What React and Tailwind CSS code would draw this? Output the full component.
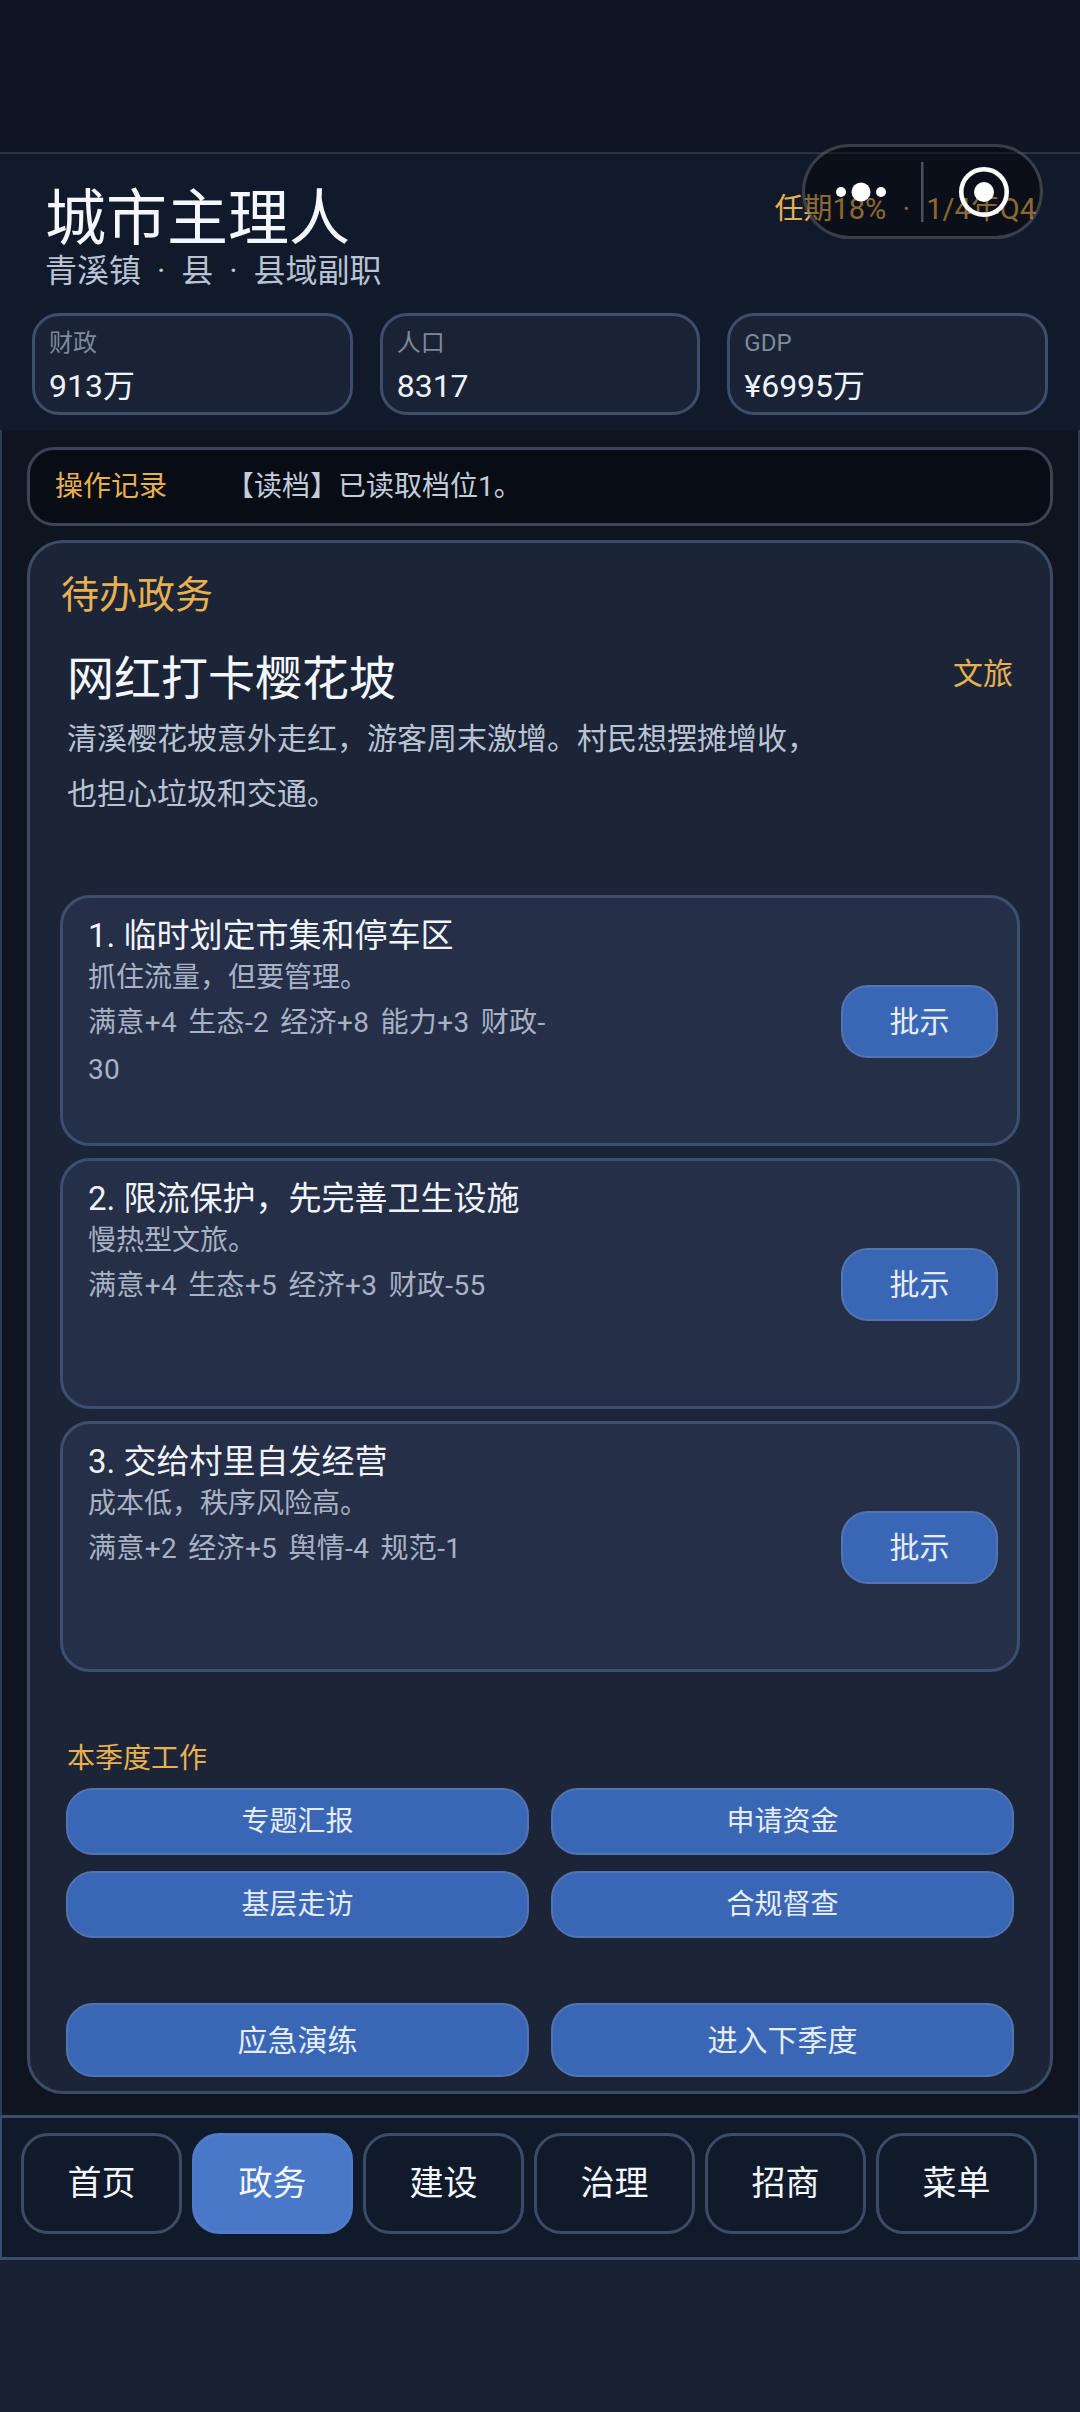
const FONT = "font-['Roboto','Noto_Sans_CJK_SC',sans-serif]";

const stats = [
  { label: "财政", value: "913万" },
  { label: "人口", value: "8317" },
  { label: "GDP", value: "¥6995万" },
];

const options = [
  { title: "1. 临时划定市集和停车区", desc: "抓住流量，但要管理。", effect: "满意+4 生态-2 经济+8 能力+3 财政-\n30" },
  { title: "2. 限流保护，先完善卫生设施", desc: "慢热型文旅。", effect: "满意+4 生态+5 经济+3 财政-55" },
  { title: "3. 交给村里自发经营", desc: "成本低，秩序风险高。", effect: "满意+2 经济+5 舆情-4 规范-1" },
];

const tabs = ["首页", "政务", "建设", "治理", "招商", "菜单"];

const Capsule = () => (
  <div className="absolute left-[802px] top-[144px] h-[95px] w-[241px] rounded-full border-[3px] border-white/20 bg-black/40">
    <svg width="241" height="95" viewBox="0 0 241 95" className="absolute -left-[3px] -top-[3px]">
      <circle cx="39" cy="48" r="5" fill="#fff" />
      <circle cx="59" cy="48" r="9.5" fill="#fff" />
      <circle cx="79" cy="48" r="5" fill="#fff" />
      <rect x="119" y="18" width="2.5" height="60" fill="#4a505c" />
      <circle cx="182" cy="48" r="22.75" fill="none" stroke="#fff" strokeWidth="4.5" />
      <circle cx="182" cy="48" r="10" fill="#fff" />
    </svg>
  </div>
);

const ActionButton = ({ children, className }) => (
  <button className={`flex items-center justify-center rounded-[27px] border-2 border-[#5274b0] bg-[#3a67b5] text-[#e6ecf7] ${className}`}>
    {children}
  </button>
);

export default function App() {
  return (
    <div className={`relative flex h-[2412px] w-[1080px] flex-col overflow-hidden bg-[#182131] ${FONT}`}>
      <div className="h-[152px] bg-[#0f1623]" />

      <header className="h-[278px] border-t-2 border-[#2a3446] bg-[#111a2b] pt-[25px]">
        <div className="flex items-start justify-between pl-[45px] pr-[44px]">
          <div>
            <h1 className="mt-[8px] text-[61px] leading-[64px] text-[#f4f7fd]">城市主理人</h1>
            <p className="text-[32px] leading-[40px] text-[#b9c3d4]">
              青溪镇<span className="px-[8px]"> · </span>县<span className="px-[8px]"> · </span>县域副职
            </p>
          </div>
          <p className="mt-[10px] text-[29px] leading-[40px] text-[#e8b04f]">
            任期18%<span className="px-[9px]"> · </span>1/4年Q4
          </p>
        </div>
        <div className="mt-[22px] grid grid-cols-3 gap-[27px] px-[32px]">
          {stats.map((s) => (
            <div key={s.label} className="h-[102px] rounded-[27px] border-[3px] border-[#3d4e6b] bg-[#192335] px-[14px] pt-[11px]">
              <div className="text-[24px] leading-[32px] text-[#7e899c]">{s.label}</div>
              <div className="mt-[7px] text-[32px] leading-[40px] text-[#eef2f9]">{s.value}</div>
            </div>
          ))}
        </div>
      </header>

      <main className="flex h-[1685px] flex-col border-x-2 border-[#2f3b52] bg-[#0e1420] px-[25px] pt-[17px]">
        <div className="flex h-[79px] items-center rounded-[27px] border-[3px] border-[#3a4456] bg-[#080c14] pl-[25px] pt-[1px]">
          <span className="w-[171px] text-[28px] text-[#e8b04f]">操作记录</span>
          <span className="text-[28px] text-[#c3ccdb]">【读档】已读取档位1。</span>
        </div>

        <section className="mt-[14px] h-[1554px] rounded-[36px] border-[3px] border-[#3b4b66] bg-[#1c2537] px-[30px]">
          <h2 className="mt-[27px] pl-[1px] text-[38px] leading-[50px] text-[#e8b04f]">待办政务</h2>
          <div className="mt-[29px] flex items-start justify-between pl-[7px] pr-[7px]">
            <h3 className="text-[47px] leading-[60px] text-[#f4f7fd]">网红打卡樱花坡</h3>
            <span className="mt-[5px] text-[30px] leading-[40px] text-[#e8b04f]">文旅</span>
          </div>
          <p className="mt-[2px] w-[760px] pl-[7px] text-[30px] leading-[55px] text-[#b9c3d4]">
            清溪樱花坡意外走红，游客周末激增。村民想摆摊增收，也担心垃圾和交通。
          </p>

          <div className="mt-[74px] flex flex-col gap-[12px]">
            {options.map((o) => (
              <div key={o.title} className="flex h-[251px] items-start justify-between rounded-[30px] border-[3px] border-[#3d4f6e] bg-[#252f48] pl-[25px] pr-[19px] pt-[17px]">
                <div className="w-[500px]">
                  <div className="text-[33px] leading-[41px] text-[#f0f4fa]">{o.title}</div>
                  <div className="text-[28px] leading-[43px] text-[#a8b2c4]">{o.desc}</div>
                  <div className="whitespace-pre-line text-[28px] leading-[47px] tracking-[0.33px] text-[#a8b2c4] [word-spacing:4px]">{o.effect}</div>
                </div>
                <ActionButton className="mt-[70px] h-[73px] w-[157px] text-[30px]">批示</ActionButton>
              </div>
            ))}
          </div>

          <div className="mt-[67px] pl-[7px] text-[28px] leading-[40px] text-[#e8b04f]">本季度工作</div>
          <div className="mt-[9px] grid grid-cols-2 gap-x-[22px] gap-y-[16px] px-[6px]">
            {["专题汇报", "申请资金", "基层走访", "合规督查"].map((t) => (
              <ActionButton key={t} className="h-[67px] text-[28px]">{t}</ActionButton>
            ))}
          </div>
          <div className="mt-[65px] grid grid-cols-2 gap-x-[22px] px-[6px]">
            {["应急演练", "进入下季度"].map((t) => (
              <ActionButton key={t} className="h-[74px] text-[30px]">{t}</ActionButton>
            ))}
          </div>
        </section>
      </main>

      <nav className="flex h-[145px] gap-[10px] border-y-[3px] border-x-2 border-[#3b4d6e] bg-[#111a2b] pl-[19px] pt-[15px]">
        {tabs.map((t) => (
          <button
            key={t}
            className={
              t === "政务"
                ? "h-[101px] w-[161px] rounded-[27px] border-[3px] border-[#4f7bc8] bg-[#4a78c8] text-[34px] text-[#f4f7fd]"
                : "h-[101px] w-[161px] rounded-[27px] border-[3px] border-[#3c4c68] bg-[#111a2b] text-[34px] text-[#f4f7fd]"
            }
          >
            {t}
          </button>
        ))}
      </nav>

      <Capsule />
    </div>
  );
}
